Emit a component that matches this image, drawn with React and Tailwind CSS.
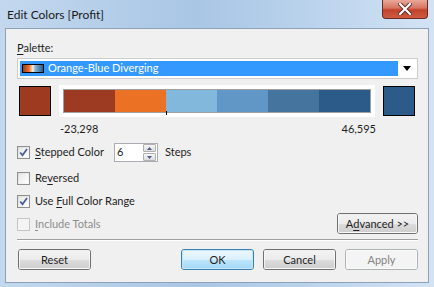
const FONT = "font-['Lato','Segoe_UI',sans-serif]"

const steps = ['#9c3b21', '#eb7125', '#82b8db', '#6197c6', '#45749f', '#2c5b89']

function Key({ children }) {
  return <span className="underline underline-offset-2">{children}</span>
}

function CheckBox({ checked, disabled }) {
  return (
    <div
      className={`w-[13px] h-[13px] shrink-0 border flex items-center justify-center ${
        disabled ? 'border-[#c6c6c6] bg-[#f4f4f4]' : 'border-[#8e8f8f] bg-gradient-to-br from-[#dcdcdc] to-[#fbfbfb]'
      }`}
    >
      <div className={`w-[9px] h-[9px] flex items-center justify-center ${disabled ? 'bg-[#f4f4f4]' : 'bg-gradient-to-br from-[#e8e8e8] to-white'}`}>
        {checked && (
          <svg width="9" height="9" viewBox="0 0 9 9">
            <path d="M1.2 4.5 L3.5 7.2 L8 1" fill="none" stroke="#4a5f97" strokeWidth="1.8" />
          </svg>
        )}
      </div>
    </div>
  )
}

function CheckRow({ checked, disabled, children, className = '' }) {
  return (
    <div className={`flex items-center h-[15px] ${className}`}>
      <CheckBox checked={checked} disabled={disabled} />
      <span className={`ml-[5px] ${disabled ? 'text-[#8d8d8d]' : ''}`}>{children}</span>
    </div>
  )
}

function Button({ children, primary, disabled, className = '' }) {
  const border = disabled ? 'border-[#adb2b5]' : primary ? 'border-[#3c7fb1]' : 'border-[#707070]'
  const bg = disabled
    ? 'bg-[#f4f4f4]'
    : primary
      ? 'bg-[linear-gradient(#eaf6fd_0%,#d9f0fc_50%,#bee6fd_51%,#a7d9f5_100%)]'
      : 'bg-[linear-gradient(#f2f2f2_0%,#ebebeb_50%,#dddddd_51%,#cfcfcf_100%)]'
  return (
    <div className={`h-[21px] w-[73px] rounded-[3px] border ${border} ${className}`}>
      <div
        className={`h-full w-full rounded-[2px] border ${primary ? 'border-[#c4e5f6]' : 'border-[#fcfcfc]/70'} ${bg} flex items-center justify-center leading-none ${
          disabled ? 'text-[#838383]' : ''
        }`}
      >
        {children}
      </div>
    </div>
  )
}

export default function App() {
  return (
    <div className={`w-[434px] h-[287px] flex flex-col overflow-hidden text-[11px] text-[#1e1e1e] ${FONT} bg-[linear-gradient(90deg,#c3d8ee_0%,#a9c6e5_45%,#b9d2ec_70%,#d3e3f4_100%)]`}>
      <div className="h-[28px] flex items-start relative shrink-0">
        <span className="ml-[7px] mt-[6px] text-[12px] text-[#1b1b1b]">Edit Colors [Profit]</span>
        <div className="absolute left-[382px] top-0 w-[46px] h-[19px] rounded-b-[4px] border border-t-0 border-[#6b2b23] bg-[linear-gradient(#e9a898_0%,#d7735f_45%,#c1422c_55%,#cf5b40_100%)] flex items-center justify-center">
          <svg width="14" height="12" viewBox="0 0 14 12">
            <path d="M2 1 L12 11 M12 1 L2 11" stroke="#5a2a22" strokeWidth="4" strokeLinecap="square" />
            <path d="M2 1 L12 11 M12 1 L2 11" stroke="#ffffff" strokeWidth="2.2" strokeLinecap="square" />
          </svg>
        </div>
      </div>

      <div className="mx-[5px] mb-[4px] flex-1 border border-[#8da2b8] bg-[#f0f0f0] flex flex-col pl-[11px] pr-[10px]">
        <div className="mt-[11px] h-[15px] leading-[15px]">
          <Key>P</Key>alette:
        </div>

        <div className="mt-[3px] h-[21px] border border-[#cdcdcd] bg-white flex items-center pl-[2px] pr-[2px]">
          <div className="h-[15px] flex-1 bg-[#3399ff] flex items-center text-white">
            <div className="ml-[2px] w-[22px] h-[9px] border border-black bg-[linear-gradient(90deg,#9c3b21,#eb7125_30%,#f6f0e8_50%,#82b8db_60%,#2c5b89)]" />
            <span className="ml-[4px]">Orange-Blue Diverging</span>
          </div>
          <div className="w-[17px] flex items-center justify-center">
            <svg width="8" height="5" viewBox="0 0 8 5">
              <path d="M0 0 L8 0 L4 5 Z" fill="#000" />
            </svg>
          </div>
        </div>

        <div className="mt-[6px] h-[32px] flex items-center">
          <div className="ml-[2px] w-[32px] h-[30px] border border-black bg-[#9e3a20]" />
          <div className="ml-[8px] w-[316px] h-[32px] bg-white pt-[4px] px-[4px] relative">
            <div className="h-[24px] border border-[#a0a0a0] flex">
              {steps.map((c) => (
                <div key={c} className="flex-1" style={{ backgroundColor: c }} />
              ))}
            </div>
            <div className="absolute left-[107px] top-[26px] w-[1px] h-[4px] bg-black" />
          </div>
          <div className="ml-[8px] w-[32px] h-[30px] border border-black bg-[#2c5b89]" />
        </div>

        <div className="mt-[4px] h-[15px] leading-[15px] flex">
          <span className="ml-[43px]">-23,298</span>
          <span className="ml-auto mr-[42px]">46,595</span>
        </div>

        <div className="mt-[7px] h-[19px] flex items-center">
          <CheckRow checked className="w-[97px]">
            <Key>S</Key>tepped Color
          </CheckRow>
          <div className="w-[44px] h-[19px] border border-[#abadb3] bg-white flex items-center">
            <span className="ml-[2px] flex-1">6</span>
            <div className="w-[14px] h-[17px] flex flex-col gap-[1px] pr-[1px]">
              <div className="flex-1 border border-[#b0b0b0] rounded-[1px] bg-[linear-gradient(#f6f6f6,#dcdcdc)] flex items-center justify-center">
                <svg width="5" height="3" viewBox="0 0 5 3"><path d="M0 3 L5 3 L2.5 0 Z" fill="#4b5e8a" /></svg>
              </div>
              <div className="flex-1 border border-[#b0b0b0] rounded-[1px] bg-[linear-gradient(#f6f6f6,#dcdcdc)] flex items-center justify-center">
                <svg width="5" height="3" viewBox="0 0 5 3"><path d="M0 0 L5 0 L2.5 3 Z" fill="#4b5e8a" /></svg>
              </div>
            </div>
          </div>
          <span className="ml-[7px]">Steps</span>
        </div>

        <CheckRow className="mt-[9px]">
          Re<Key>v</Key>ersed
        </CheckRow>

        <CheckRow checked className="mt-[8px]">
          Use <Key>F</Key>ull Color Range
        </CheckRow>

        <div className="mt-[4px] flex items-center h-[23px]">
          <CheckRow disabled>
            <Key>I</Key>nclude Totals
          </CheckRow>
          <Button className="ml-auto w-[81px] -mt-[3px]">
            A<Key>d</Key>vanced &gt;&gt;
          </Button>
        </div>

        <div className="mt-[3px] h-[2px] border-t border-[#a0a0a0] border-b border-b-white" />

        <div className="mt-[8px] flex">
          <Button className="ml-[1px]">Reset</Button>
          <Button primary className="ml-auto">OK</Button>
          <Button className="ml-[9px]">Cancel</Button>
          <Button disabled className="ml-[9px]">Apply</Button>
        </div>
      </div>
    </div>
  )
}
